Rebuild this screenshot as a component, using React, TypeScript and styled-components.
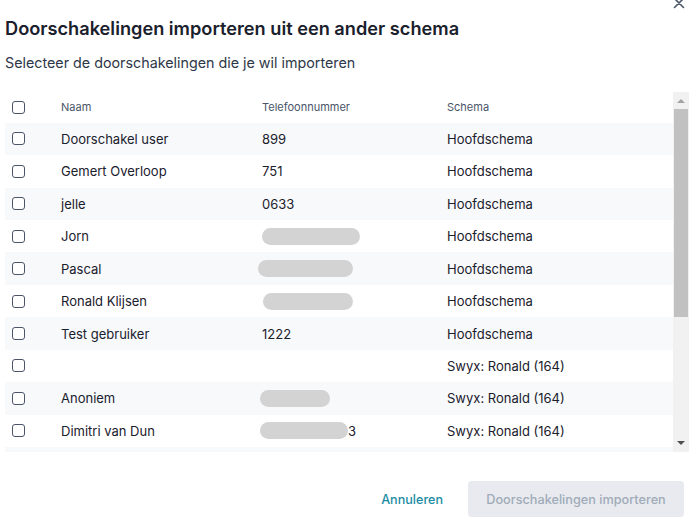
import React from "react";
import styled, { createGlobalStyle } from "styled-components";

const GlobalStyle = createGlobalStyle`
  html, body {
    margin: 0;
    padding: 0;
    background: #ffffff;
  }
  body {
    font-family: Inter, "Noto Sans", Arial, sans-serif;
    color: #1a202c;
  }
`;

type Forward = {
  name: string;
  phone?: string;
  redacted?: { width: number; shift?: number; tail?: string };
  schema: string;
};

const forwards: Forward[] = [
  { name: "Doorschakel user", phone: "899", schema: "Hoofdschema" },
  { name: "Gemert Overloop", phone: "751", schema: "Hoofdschema" },
  { name: "jelle", phone: "0633", schema: "Hoofdschema" },
  { name: "Jorn", redacted: { width: 98 }, schema: "Hoofdschema" },
  { name: "Pascal", redacted: { width: 95, shift: -4 }, schema: "Hoofdschema" },
  { name: "Ronald Klijsen", redacted: { width: 90, shift: 1 }, schema: "Hoofdschema" },
  { name: "Test gebruiker", phone: "1222", schema: "Hoofdschema" },
  { name: "", phone: "", schema: "Swyx: Ronald (164)" },
  { name: "Anoniem", redacted: { width: 70, shift: -2 }, schema: "Swyx: Ronald (164)" },
  { name: "Dimitri van Dun", redacted: { width: 88, shift: -2, tail: "3" }, schema: "Swyx: Ronald (164)" },
];

const Dialog = styled.div`
  position: relative;
  width: 699px;
  height: 522px;
  box-sizing: border-box;
  padding: 0 10px 0 5px;
  display: flex;
  flex-direction: column;
  overflow: hidden;
`;

const CloseButton = styled.button`
  position: absolute;
  top: -5px;
  right: 12px;
  width: 16px;
  height: 16px;
  padding: 0;
  border: none;
  background: none;
  display: flex;
  align-items: center;
  justify-content: center;
`;

const Title = styled.h2`
  margin: 17px 0 0;
  font-size: 18.2px;
  line-height: 22px;
  font-weight: 600;
  color: #1a202c;
`;

const Subtitle = styled.p`
  margin: 14px 0 0;
  font-size: 14.3px;
  line-height: 20px;
  color: #2d3748;
`;

const TableFrame = styled.div`
  margin-top: 19px;
  height: 360px;
  display: flex;
`;

const Rows = styled.div`
  flex: 1;
  overflow: hidden;
`;

const Row = styled.div<{ $striped?: boolean; $header?: boolean }>`
  height: ${(p) => (p.$header ? "30.7px" : "32.45px")};
  display: grid;
  grid-template-columns: 56px 201px 185px 1fr;
  align-items: center;
  background: ${(p) => (p.$striped ? "#f7f9fb" : "#ffffff")};
  font-size: ${(p) => (p.$header ? "11px" : "13px")};
  color: ${(p) => (p.$header ? "#4a5568" : "#1a202c")};
`;

const CheckCell = styled.div`
  padding-left: 7px;
  display: flex;
  align-items: center;
`;

const Checkbox = styled.span`
  width: 11px;
  height: 11px;
  border: 1.5px solid #4a5568;
  border-radius: 3px;
  background: #ffffff;
`;

const Cell = styled.div`
  white-space: nowrap;
  display: flex;
  align-items: center;
`;

const Redacted = styled.span<{ $width: number; $shift: number }>`
  display: inline-block;
  width: ${(p) => p.$width}px;
  height: 17px;
  margin-left: ${(p) => p.$shift}px;
  border-radius: 9px;
  background: #d3d3d3;
`;

const Scrollbar = styled.div`
  width: 16px;
  background: #f1f1f1;
  display: flex;
  flex-direction: column;
  align-items: center;
`;

const Arrow = styled.div`
  height: 17px;
  width: 16px;
  display: flex;
  align-items: center;
  justify-content: center;
`;

const Thumb = styled.div`
  width: 14px;
  height: 208px;
  background: #c1c1c1;
`;

const Track = styled.div`
  flex: 1;
`;

const Footer = styled.div`
  margin-top: 29px;
  padding-right: 5px;
  display: flex;
  justify-content: flex-end;
  align-items: center;
  gap: 25px;
`;

const LinkButton = styled.button`
  border: none;
  background: none;
  padding: 0;
  font-family: inherit;
  font-size: 12.6px;
  font-weight: 500;
  color: #1b8ca3;
`;

const PrimaryButton = styled.button`
  height: 36px;
  width: 216px;
  border: none;
  border-radius: 4px;
  background: #e8eaef;
  color: #a0aab8;
  font-family: inherit;
  font-size: 12.7px;
  font-weight: 500;
`;

export default function App() {
  return (
    <>
      <GlobalStyle />
      <Dialog>
        <CloseButton aria-label="Sluiten">
          <svg width="12" height="12" viewBox="0 0 12 12">
            <path d="M1.5 1.5 L10.5 10.5 M10.5 1.5 L1.5 10.5" stroke="#4a5568" strokeWidth="1.6" strokeLinecap="round" />
          </svg>
        </CloseButton>
        <Title>Doorschakelingen importeren uit een ander schema</Title>
        <Subtitle>Selecteer de doorschakelingen die je wil importeren</Subtitle>
        <TableFrame>
          <Rows>
            <Row $header>
              <CheckCell>
                <Checkbox />
              </CheckCell>
              <Cell>Naam</Cell>
              <Cell>Telefoonnummer</Cell>
              <Cell>Schema</Cell>
            </Row>
            {forwards.map((f, i) => (
              <Row key={i} $striped={i % 2 === 0}>
                <CheckCell>
                  <Checkbox />
                </CheckCell>
                <Cell>{f.name}</Cell>
                <Cell>
                  {f.redacted ? (
                    <>
                      <Redacted $width={f.redacted.width} $shift={f.redacted.shift ?? 0} />
                      {f.redacted.tail}
                    </>
                  ) : (
                    f.phone
                  )}
                </Cell>
                <Cell>{f.schema}</Cell>
              </Row>
            ))}
            {/* next row, scrolled out of view */}
            <Row $striped />
          </Rows>
          <Scrollbar>
            <Arrow>
              <svg width="8" height="5" viewBox="0 0 8 5">
                <path d="M0 5 L4 1 L8 5 Z" fill="#a3a3a3" />
              </svg>
            </Arrow>
            <Thumb />
            <Track />
            <Arrow>
              <svg width="8" height="5" viewBox="0 0 8 5">
                <path d="M0 0 L8 0 L4 4 Z" fill="#505050" />
              </svg>
            </Arrow>
          </Scrollbar>
        </TableFrame>
        <Footer>
          <LinkButton>Annuleren</LinkButton>
          <PrimaryButton>Doorschakelingen importeren</PrimaryButton>
        </Footer>
      </Dialog>
    </>
  );
}
